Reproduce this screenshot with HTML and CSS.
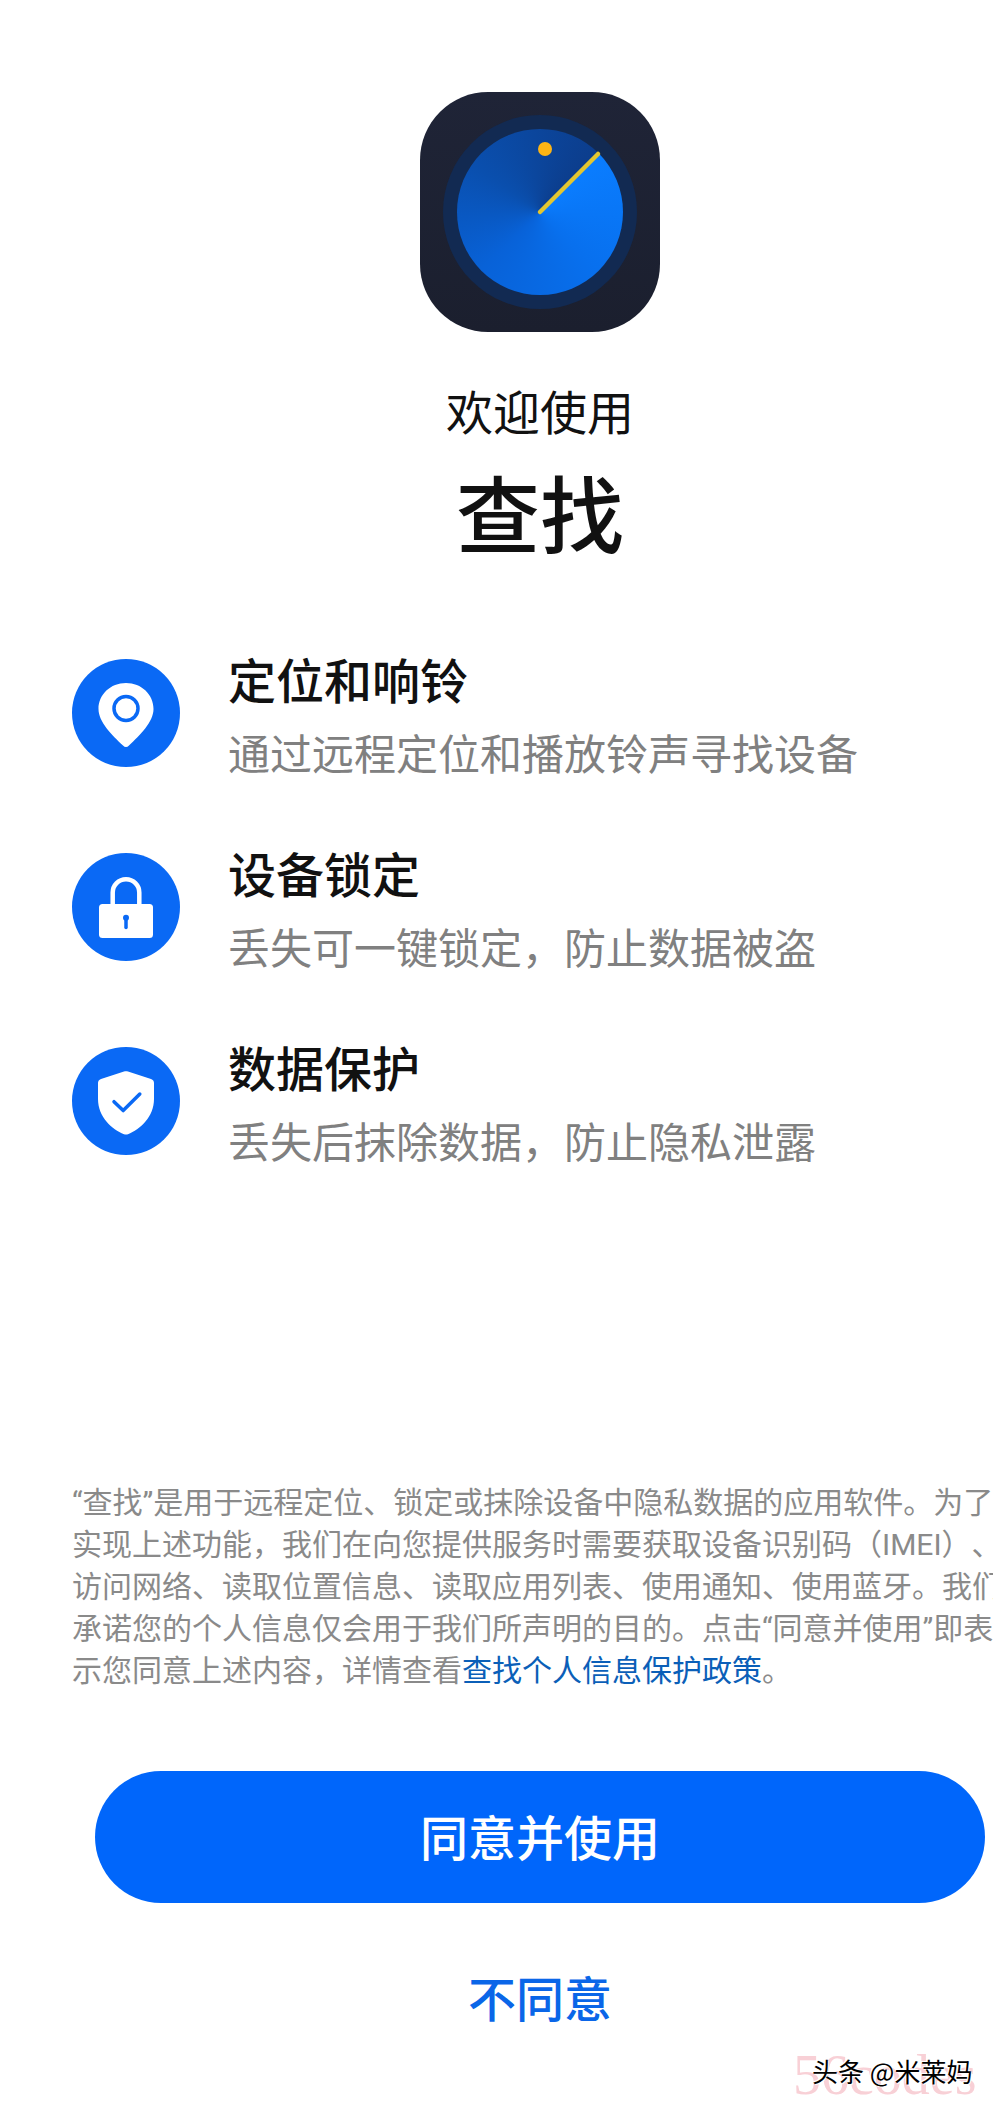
FILE: index.html
```html
<!DOCTYPE html>
<html lang="zh-CN">
<head>
<meta charset="utf-8">
<title>查找</title>
<link rel="stylesheet" href="styles.css">
</head>
<body>
<main class="screen">
  <header class="hero">
    <div class="app-icon">
      <div class="ring">
        <div class="dial">
          <svg class="dial-marks" viewBox="0 0 166 166" aria-hidden="true">
            <line x1="83" y1="83" x2="141" y2="25" class="hand"/>
            <circle cx="88" cy="20" r="7" class="dot"/>
          </svg>
        </div>
      </div>
    </div>
    <p class="welcome">欢迎使用</p>
    <h1 class="title">查找</h1>
  </header>

  <section class="features">
    <div class="feature">
      <svg class="feature-icon" viewBox="0 0 108 108" aria-hidden="true">
        <circle cx="54" cy="54" r="54" class="disc"/>
        <path class="glyph" d="M54 24C69.500 24 81.500 35.500 81.500 50C81.500 63 68 76 57 86.500C55 88.500 53 88.500 51 86.500C40 76 26.500 63 26.500 50C26.500 35.500 38.500 24 54 24Z"/>
        <circle cx="54" cy="49.500" r="12" class="line"/>
      </svg>
      <div class="feature-text">
        <h2 class="feature-title">定位和响铃</h2>
        <p class="feature-sub">通过远程定位和播放铃声寻找设备</p>
      </div>
    </div>
    <div class="feature">
      <svg class="feature-icon" viewBox="0 0 108 108" aria-hidden="true">
        <circle cx="54" cy="54" r="54" class="disc"/>
        <path class="shackle" d="M40.700 51V39.600A13.300 13.300 0 0 1 67.300 39.600V51"/>
        <rect x="27" y="51" width="54" height="34" rx="3.500" class="glyph"/>
        <circle cx="54" cy="64.700" r="3" class="key"/>
        <line x1="54" y1="65" x2="54" y2="74.500" class="line"/>
      </svg>
      <div class="feature-text">
        <h2 class="feature-title">设备锁定</h2>
        <p class="feature-sub">丢失可一键锁定，防止数据被盗</p>
      </div>
    </div>
    <div class="feature">
      <svg class="feature-icon" viewBox="0 0 108 108" aria-hidden="true">
        <circle cx="54" cy="54" r="54" class="disc"/>
        <path class="glyph" d="M52 24.600C53.300 24.100 54.700 24.100 56 24.600L79 32C81 32.700 82 34 82 36V52C82 70 68 82.500 56 87.200C54.700 87.700 53.300 87.700 52 87.200C40 82.500 26 70 26 52V36C26 34 27 32.700 29 32Z"/>
        <path class="line" d="M42 54.700L51.200 63.600L67.800 47.100"/>
      </svg>
      <div class="feature-text">
        <h2 class="feature-title">数据保护</h2>
        <p class="feature-sub">丢失后抹除数据，防止隐私泄露</p>
      </div>
    </div>
  </section>

  <p class="notice">“查找”是用于远程定位、锁定或抹除设备中隐私数据的应用软件。为了<br>实现上述功能，我们在向您提供服务时需要获取设备识别码（IMEI）、<br>访问网络、读取位置信息、读取应用列表、使用通知、使用蓝牙。我们<br>承诺您的个人信息仅会用于我们所声明的目的。点击“同意并使用”即表<br>示您同意上述内容，详情查看<a class="notice-link">查找个人信息保护政策</a>。</p>

  <button class="agree">同意并使用</button>
  <button class="decline">不同意</button>

  <div class="watermark">
    <span class="mark-back">56codes</span>
    <span class="mark-front">头条 @米莱妈</span>
  </div>
</main>
</body>
</html>
```

FILE: styles.css
```css
html, body {
  margin: 0;
  padding: 0;
  background: #fff;
  overflow: hidden;
}

.screen {
  position: relative;
  width: 1080px;
  height: 2107px;
  overflow: hidden;
  display: flex;
  flex-direction: column;
  align-items: center;
  font-family: "Noto Sans CJK SC", "Noto Sans", sans-serif;
  color: #111;
}

.hero {
  display: flex;
  flex-direction: column;
  align-items: center;
  padding-top: 92px;
}

.app-icon {
  width: 240px;
  height: 240px;
  border-radius: 68px;
  background: linear-gradient(180deg, #1f2437 0%, #1b1f2e 100%);
  display: flex;
  align-items: center;
  justify-content: center;
}

.ring {
  width: 194px;
  height: 194px;
  border-radius: 50%;
  background: #122a52;
  display: flex;
  align-items: center;
  justify-content: center;
}

.dial {
  position: relative;
  width: 166px;
  height: 166px;
  border-radius: 50%;
  background: conic-gradient(from 45deg, #0a7dff 0deg, #0870ee 90deg, #0862d8 180deg, #0a4fae 260deg, #0c3d8c 360deg);
}

.dial-marks {
  position: absolute;
  inset: 0;
  width: 100%;
  height: 100%;
}

.hand {
  stroke: #e3c62f;
  stroke-width: 4.500;
  stroke-linecap: round;
}

.dot {
  fill: #fdb515;
}

.welcome {
  margin: 48px 0 0;
  font-size: 47px;
  line-height: 60px;
  font-weight: 400;
}

.title {
  margin: 21px 0 0;
  font-size: 84px;
  line-height: 100px;
  font-weight: 500;
}

.features {
  align-self: stretch;
  margin-top: 87px;
  padding-left: 72px;
  display: flex;
  flex-direction: column;
  gap: 60px;
}

.feature {
  display: flex;
  align-items: flex-start;
  gap: 48px;
}

.feature-icon {
  width: 108px;
  height: 108px;
  margin-top: 11px;
  flex: none;
}

.disc {
  fill: #0a69f5;
}

.glyph {
  fill: #fff;
}

.line {
  fill: none;
  stroke: #0a69f5;
  stroke-width: 3.500;
  stroke-linecap: round;
  stroke-linejoin: round;
}

.shackle {
  fill: none;
  stroke: #fff;
  stroke-width: 4.500;
}

.key {
  fill: #0a69f5;
}

.feature-text {
  display: flex;
  flex-direction: column;
  gap: 14px;
}

.feature-title {
  margin: 0;
  font-size: 48px;
  line-height: 60px;
  font-weight: 500;
  color: #111;
}

.feature-sub {
  margin: 0;
  font-size: 42px;
  line-height: 60px;
  font-weight: 400;
  color: #808080;
}

.notice {
  align-self: stretch;
  margin: 312px 0 0;
  padding-left: 72px;
  font-family: "Roboto", "Noto Sans CJK SC", sans-serif;
  font-size: 30px;
  line-height: 42px;
  color: #8a8a8a;
  white-space: nowrap;
  text-spacing-trim: space-all;
}

.notice-link {
  color: #0b5fb8;
}

.agree {
  margin-top: 79px;
  width: 890px;
  height: 132px;
  padding: 0 0 4px;
  border: 0;
  border-radius: 66px;
  background: #0066fb;
  color: #fff;
  font: 500 48px/60px "Noto Sans CJK SC", "Noto Sans", sans-serif;
}

.decline {
  margin-top: 63px;
  padding: 0;
  border: 0;
  background: none;
  color: #0a66e8;
  font: 500 48px/60px "Noto Sans CJK SC", "Noto Sans", sans-serif;
}

.watermark {
  position: absolute;
  left: 793px;
  top: 2050px;
  width: 190px;
  height: 50px;
}

.mark-back {
  position: absolute;
  left: 0;
  bottom: 0;
  font-family: "Liberation Serif", serif;
  font-size: 56px;
  line-height: 50px;
  color: #f8d0d6;
  white-space: nowrap;
}

.mark-front {
  position: absolute;
  left: 19px;
  top: 6px;
  font-size: 26px;
  line-height: 30px;
  color: #000;
  white-space: nowrap;
  text-shadow: 1px 1px 0 #fff, -1px -1px 0 #fff;
}
```
